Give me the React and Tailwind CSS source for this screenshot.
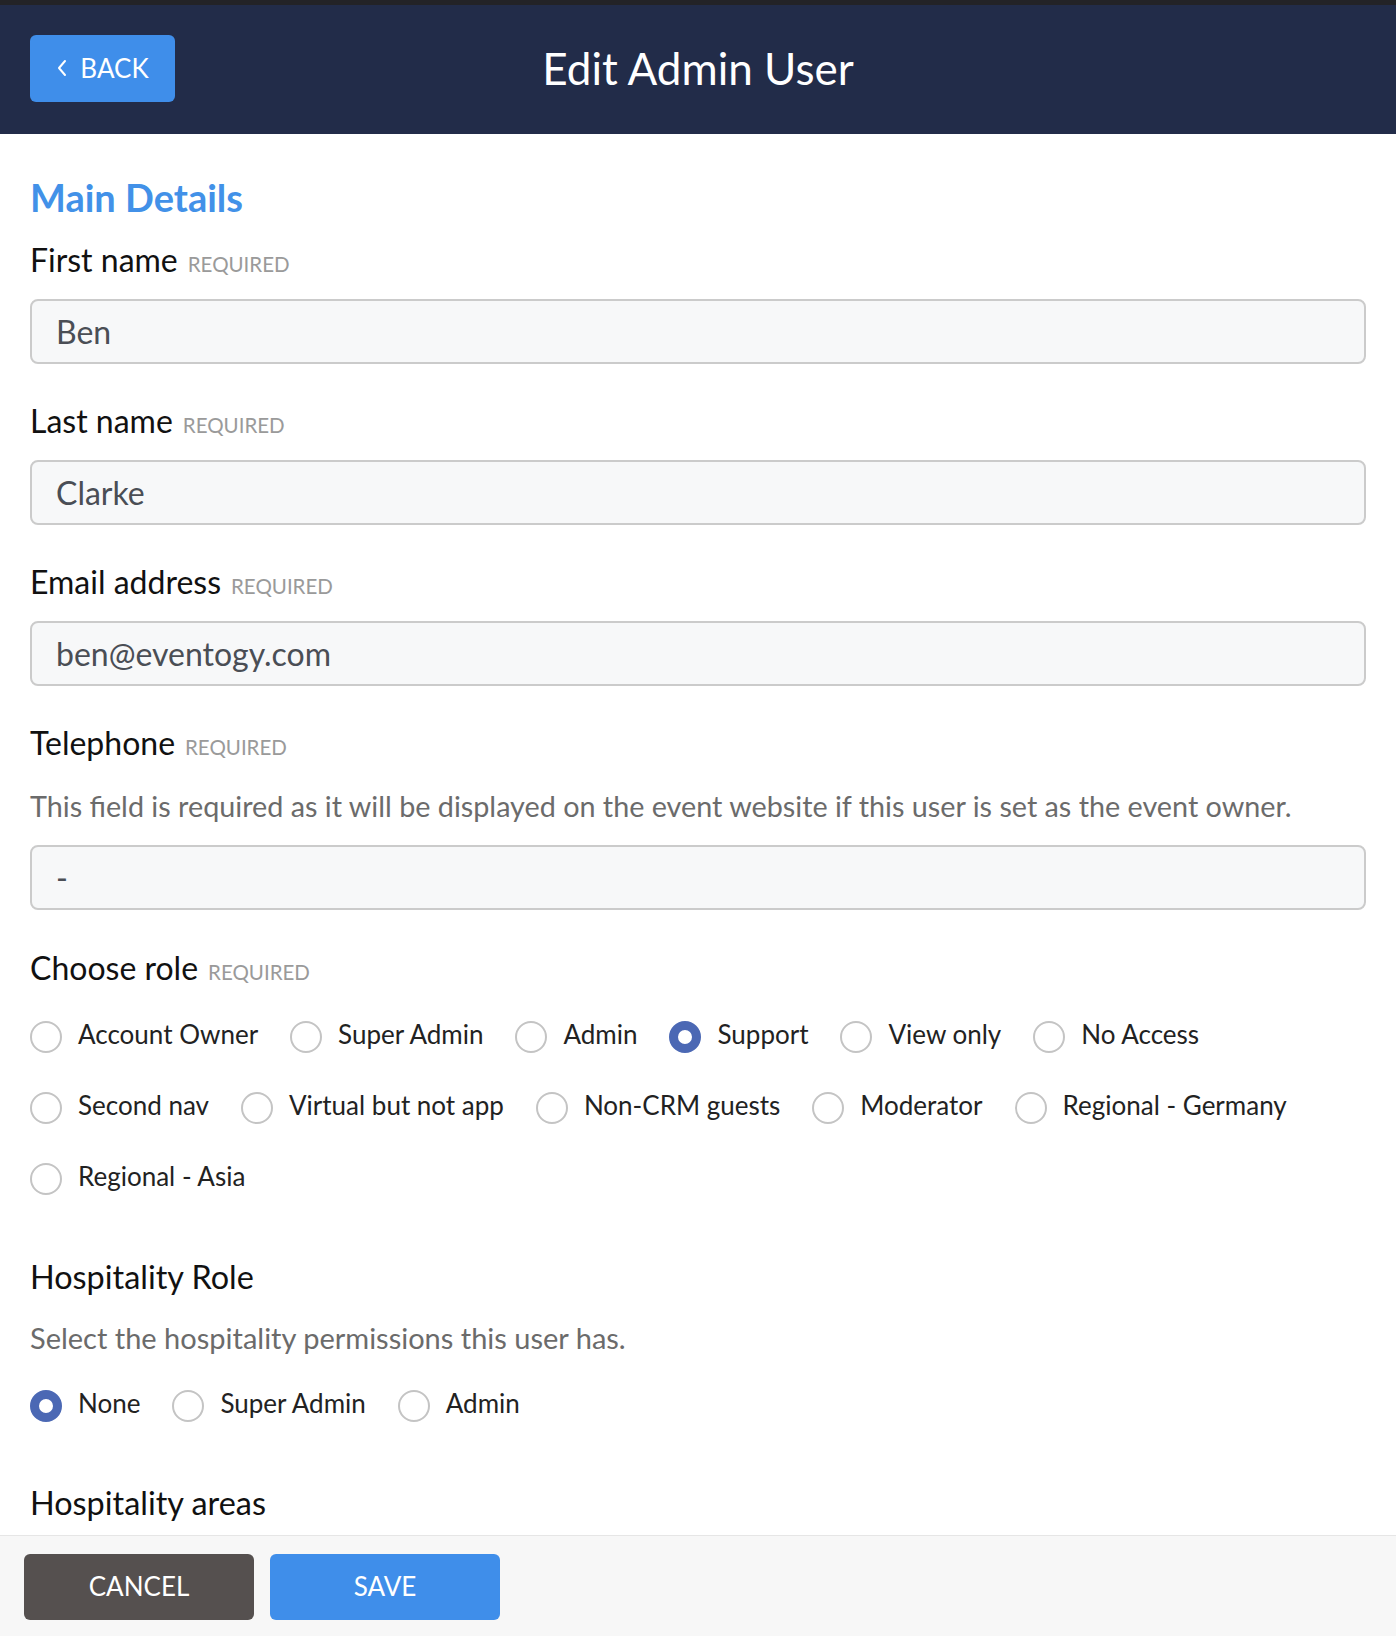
import React from "react";

function Field({ label, value, help }) {
  return (
    <div className="flex flex-col">
      <div className="flex items-baseline gap-[10px] h-[40px] leading-[40px]">
        <span className="text-[32px] text-[#111111]">{label}</span>
        <span className="text-[20.5px] text-[#9a9a9a] uppercase">Required</span>
      </div>
      {help && (
        <p className="mt-[25px] text-[28.75px] leading-[36px] text-[#6b6b6b]">{help}</p>
      )}
      <div
        className={`${help ? "mt-[21px]" : "mt-[19px]"} h-[65px] rounded-[8px] border-2 border-[#cbcbcb] bg-[#f7f8f9] flex items-center px-[24px] text-[32px] text-[#4a4e55]`}
      >
        {value}
      </div>
    </div>
  );
}

function Radio({ label, checked }) {
  return (
    <div className="flex items-center h-[40px]">
      {checked ? (
        <span className="mt-[6px] w-[32px] h-[32px] rounded-full border-[9px] border-[#4b68b4] bg-white shrink-0" />
      ) : (
        <span className="mt-[6px] w-[32px] h-[32px] rounded-full border-2 border-[#c4c4c4] bg-white shrink-0" />
      )}
      <span className="ml-[16px] text-[26px] text-[#222222] whitespace-nowrap">{label}</span>
    </div>
  );
}

export default function App() {
  const roles = [
    "Account Owner",
    "Super Admin",
    "Admin",
    "Support",
    "View only",
    "No Access",
    "Second nav",
    "Virtual but not app",
    "Non-CRM guests",
    "Moderator",
    "Regional - Germany",
    "Regional - Asia",
  ];
  return (
    <div className="h-[1636px] flex flex-col bg-white overflow-hidden font-['Lato','Noto_Sans',sans-serif]">
      <div className="h-[5px] bg-[#232327]" />
      <header className="h-[129px] bg-[#222c49] grid grid-cols-[1fr_auto_1fr] items-center px-[30px]">
        <div>
          <button className="w-[145px] h-[67px] rounded-[6px] bg-[#3f8eea] text-white flex items-center justify-center gap-[12px] text-[26px] -mt-[3px]">
            <svg width="12" height="18" viewBox="0 0 12 18" fill="none">
              <path d="M9 2 L3 9 L9 16" stroke="white" strokeWidth="2" strokeLinecap="round" strokeLinejoin="round" />
            </svg>
            <span>BACK</span>
          </button>
        </div>
        <h1 className="text-white text-[44px] leading-none -mt-[4px]">Edit Admin User</h1>
        <div />
      </header>

      <main className="flex-1 overflow-hidden px-[30px] pt-[41px]">
        <h2 className="text-[38px] leading-[44px] font-bold text-[#4291e8]">Main Details</h2>
        <div className="mt-[21px] flex flex-col gap-[37px]">
          <Field label="First name" value="Ben" />
          <Field label="Last name" value="Clarke" />
          <Field label="Email address" value="ben@eventogy.com" />
          <Field
            label="Telephone"
            value="-"
            help="This field is required as it will be displayed on the event website if this user is set as the event owner."
          />
        </div>

        <div className="mt-[38px] flex items-baseline gap-[10px] h-[40px] leading-[40px]">
          <span className="text-[32px] text-[#111111]">Choose role</span>
          <span className="text-[20.5px] text-[#9a9a9a] uppercase">Required</span>
        </div>
        <div className="mt-[26px] flex flex-wrap gap-x-[32px] gap-y-[31px]">
          {roles.map((r) => (
            <Radio key={r} label={r} checked={r === "Support"} />
          ))}
        </div>

        <h3 className="mt-[61px] text-[32.4px] leading-[40px] text-[#111111]">Hospitality Role</h3>
        <p className="mt-[23px] text-[29px] leading-[36px] text-[#6b6b6b]">
          Select the hospitality permissions this user has.
        </p>
        <div className="mt-[27px] flex flex-wrap gap-x-[32px]">
          <Radio label="None" checked />
          <Radio label="Super Admin" />
          <Radio label="Admin" />
        </div>

        <h3 className="mt-[60px] text-[32.4px] leading-[40px] text-[#111111]">Hospitality areas</h3>
      </main>

      <footer className="h-[101px] shrink-0 border-t border-[#e6e6e6] bg-[#f7f7f7] flex items-center gap-[16px] px-[24px]">
        <button className="w-[230px] h-[66px] rounded-[6px] bg-[#55504f] text-white text-[26px] mt-[1px]">CANCEL</button>
        <button className="w-[230px] h-[66px] rounded-[6px] bg-[#3f8eea] text-white text-[26px] mt-[1px]">SAVE</button>
      </footer>
    </div>
  );
}
